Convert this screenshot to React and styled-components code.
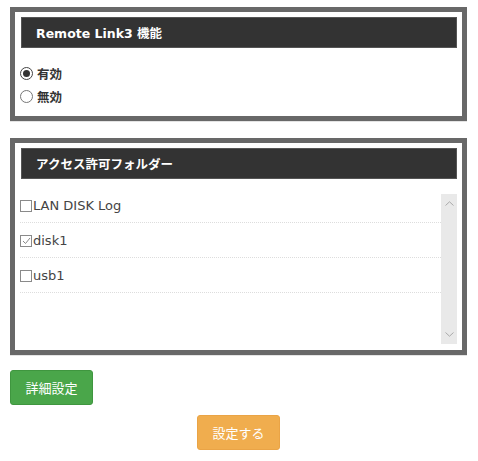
import React from 'react';
import styled, { createGlobalStyle } from 'styled-components';

const GlobalStyle = createGlobalStyle`
  body {
    margin: 0;
    background: #fff;
    font-family: "DejaVu Sans", "Noto Sans CJK JP", sans-serif;
    color: #333;
  }
`;

const Page = styled.div`
  width: 478px;
  padding: 7px 11px 0 10px;
  box-sizing: border-box;
  display: flex;
  flex-direction: column;
`;

const Panel = styled.section`
  border: 5px solid #686868;
  background: #fff;
  padding: ${(p) => p.$pad};
  box-shadow: 0 1px 0 #e4e4e4;
  margin-bottom: ${(p) => p.$gap}px;
`;

const Header = styled.h2`
  margin: 0 0 0 1px;
  height: 31px;
  box-sizing: border-box;
  background: #333;
  border: 1px solid #555;
  color: #fff;
  font-size: 12.5px;
  font-weight: bold;
  display: flex;
  align-items: center;
  padding-left: 14px;
`;

const RadioGroup = styled.div`
  padding: 14px 0 8px;
  display: flex;
  flex-direction: column;
`;

const RadioRow = styled.label`
  height: 23px;
  display: flex;
  align-items: center;
  gap: 4px;
  font-size: 12.5px;
  font-weight: bold;
  color: #333;
`;

const RadioDot = styled.span`
  width: 13px;
  height: 13px;
  border-radius: 50%;
  border: 1px solid ${(p) => (p.$on ? '#444' : '#777')};
  box-sizing: border-box;
  display: flex;
  align-items: center;
  justify-content: center;
  &::after {
    content: '';
    width: 7px;
    height: 7px;
    border-radius: 50%;
    background: ${(p) => (p.$on ? '#333' : 'transparent')};
  }
`;

const ListArea = styled.div`
  margin-top: 9px;
  display: flex;
  height: 162px;
`;

const Rows = styled.div`
  flex: 1;
  display: flex;
  flex-direction: column;
`;

const Row = styled.label`
  height: 35px;
  flex-shrink: 0;
  box-sizing: border-box;
  border-bottom: 1px dotted #ddd;
  display: flex;
  align-items: center;
  font-size: 13px;
  color: #444;
`;

const Box = styled.span`
  width: 12px;
  height: 12px;
  border: 1px solid #8a8a8a;
  box-sizing: border-box;
  display: flex;
  align-items: center;
  justify-content: center;
  margin-right: 1px;
  margin-top: 1px;
`;

const Track = styled.div`
  width: 16px;
  margin: 6px 0 6px;
  background: #e9e9e9;
  display: flex;
  flex-direction: column;
  justify-content: space-between;
  align-items: center;
  padding: 7px 0;
  box-sizing: border-box;
`;

const Actions = styled.div`
  display: flex;
  flex-direction: column;
`;

const Button = styled.button`
  width: 83px;
  height: 35px;
  border-radius: 3px;
  border: 1px solid ${(p) => p.$edge};
  background: ${(p) => p.$bg};
  color: #fff;
  font-family: "Noto Sans CJK JP", sans-serif;
  font-size: 13px;
  padding: 0;
  align-self: ${(p) => p.$align};
  margin: ${(p) => p.$margin};
`;

const Chevron = ({ up }) => (
  <svg width="9" height="5" viewBox="0 0 9 5">
    <path
      d={up ? 'M0.5 4.5 L4.5 0.8 L8.5 4.5' : 'M0.5 0.5 L4.5 4.2 L8.5 0.5'}
      fill="none"
      stroke="#aaa"
      strokeWidth="1"
    />
  </svg>
);

const folders = [
  { name: 'LAN DISK Log', checked: false },
  { name: 'disk1', checked: true },
  { name: 'usb1', checked: false },
];

const App = () => (
  <>
    <GlobalStyle />
    <Page>
      <Panel $pad="5px 5px 0 5px" $gap={17}>
        <Header>Remote Link3 機能</Header>
        <RadioGroup>
          <RadioRow>
            <RadioDot $on />
            有効
          </RadioRow>
          <RadioRow>
            <RadioDot />
            無効
          </RadioRow>
        </RadioGroup>
      </Panel>
      <Panel $pad="5px 5px 0 5px" $gap={15}>
        <Header>アクセス許可フォルダー</Header>
        <ListArea>
          <Rows>
            {folders.map((f) => (
              <Row key={f.name}>
                <Box>
                  {f.checked && (
                    <svg width="9" height="8" viewBox="0 0 9 8">
                      <path d="M1 4 L3.5 6.5 L8 1" fill="none" stroke="#888" strokeWidth="1" />
                    </svg>
                  )}
                </Box>
                {f.name}
              </Row>
            ))}
          </Rows>
          <Track>
            <Chevron up />
            <Chevron />
          </Track>
        </ListArea>
      </Panel>
      <Actions>
        <Button $bg="#4aa64a" $edge="#3f963f" $align="flex-start" $margin="0">
          詳細設定
        </Button>
        <Button $bg="#f0ad4e" $edge="#eaa446" $align="center" $margin="10px 0 0">
          設定する
        </Button>
      </Actions>
    </Page>
  </>
);

export default App;
